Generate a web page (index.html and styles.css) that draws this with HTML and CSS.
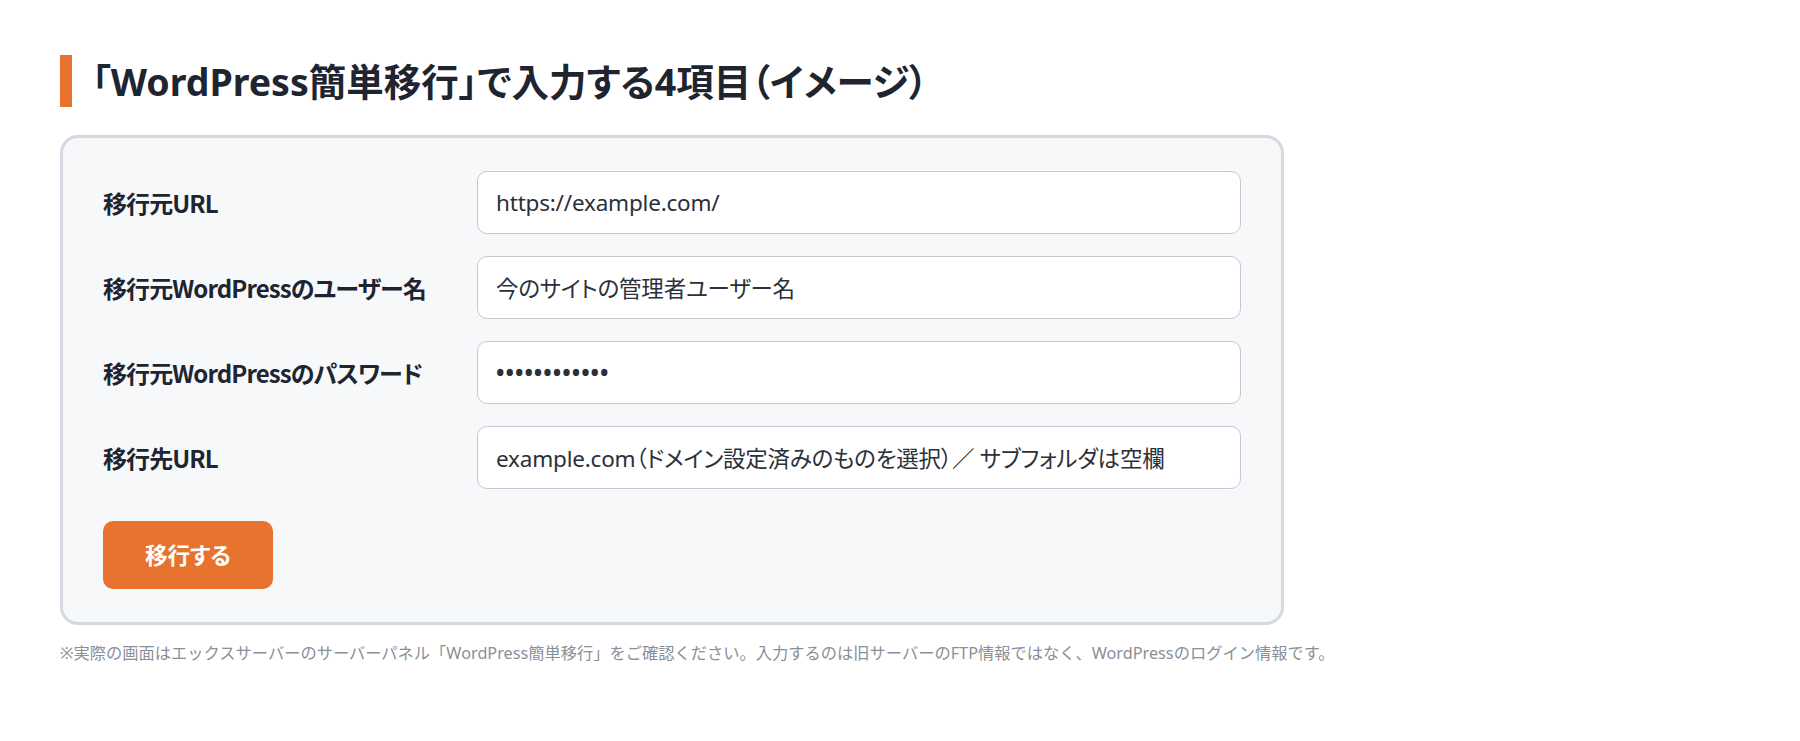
FILE: index.html
```html
<!DOCTYPE html>
<html lang="ja">
<head>
<meta charset="utf-8">
<title>WordPress簡単移行の入力項目</title>
<link rel="stylesheet" href="styles.css">
</head>
<body>
<main class="page">
  <h2 class="section-title">「WordPress簡単移行」で入力する4項目（イメージ）</h2>

  <div class="migrate-card">
    <div class="form-grid">
      <div class="form-label">移行元URL</div>
      <div class="form-field">https://example.com/</div>

      <div class="form-label">移行元WordPressのユーザー名</div>
      <div class="form-field">今のサイトの管理者ユーザー名</div>

      <div class="form-label">移行元WordPressのパスワード</div>
      <div class="form-field form-field--secret">••••••••••••</div>

      <div class="form-label">移行先URL</div>
      <div class="form-field">example.com（ドメイン設定済みのものを選択）／ サブフォルダは空欄</div>
    </div>
    <button class="submit-btn" type="button">移行する</button>
  </div>

  <p class="note">※実際の画面はエックスサーバーのサーバーパネル「WordPress簡単移行」をご確認ください。入力するのは旧サーバーのFTP情報ではなく、WordPressのログイン情報です。</p>
</main>
</body>
</html>
```

FILE: styles.css
```css
* {
  box-sizing: border-box;
}

html, body {
  margin: 0;
  background: #ffffff;
}

body {
  font-family: "Noto Sans", "Noto Sans CJK JP", sans-serif;
  color: #1f2530;
}

.page {
  padding: 55px 60px 40px;
}

.section-title {
  display: flex;
  align-items: center;
  height: 52px;
  margin: 0 0 28px;
  padding-left: 20px;
  border-left: 12px solid #e8732e;
  font-size: 37.5px;
  font-weight: 700;
  line-height: 1.2;
  color: #1f2530;
  font-feature-settings: "palt";
}

.migrate-card {
  width: 1224px;
  padding: 33px 40px 33px;
  background: #f7f8fa;
  border: 3px solid #d3d8e1;
  border-radius: 18px;
}

.form-grid {
  display: grid;
  grid-template-columns: 350px 1fr;
  column-gap: 24px;
  row-gap: 22.5px;
  align-items: center;
}

.form-label {
  font-family: "Noto Sans CJK JP", "Noto Sans", sans-serif;
  font-feature-settings: "palt";
  font-size: 24px;
  font-weight: 700;
  line-height: 1.3;
  letter-spacing: -0.9px;
  white-space: nowrap;
  color: #1f2530;
}

.form-field {
  display: flex;
  align-items: center;
  height: 62.5px;
  padding: 0 18px;
  background: #ffffff;
  border: 1px solid #c3c8d2;
  border-radius: 10px;
  font-size: 22.5px;
  color: #2b303a;
  white-space: nowrap;
  font-feature-settings: "palt";
  letter-spacing: -0.2px;
}

.form-field--secret {
  letter-spacing: 1px;
  font-weight: 700;
}

.submit-btn {
  display: block;
  margin-top: 32px;
  height: 68px;
  padding: 0 42px;
  border: none;
  border-radius: 10px;
  background: #e8732e;
  color: #ffffff;
  font-family: inherit;
  font-feature-settings: "palt";
  font-size: 22.5px;
  font-weight: 700;
  cursor: pointer;
}

.note {
  margin: 15px 0 0;
  font-size: 16.25px;
  line-height: 1.7;
  color: #8a8f98;
}
```
